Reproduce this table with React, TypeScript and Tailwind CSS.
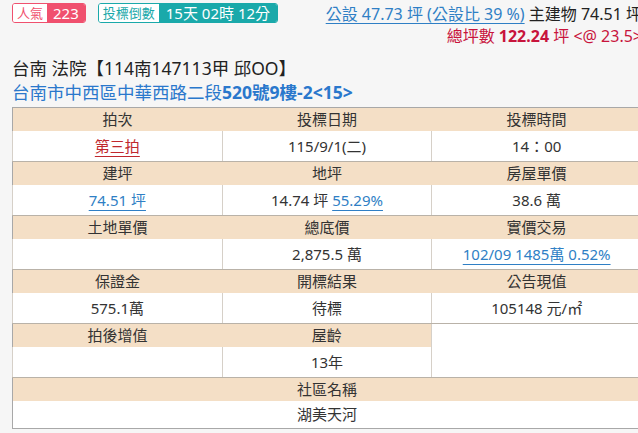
import React from "react";

const font = { fontFamily: '"Noto Sans", "Noto Sans CJK TC", sans-serif' };

function Head({ children, span }: { children: React.ReactNode; span?: number }) {
  return (
    <td colSpan={span} className="h-[23px] bg-[#f4dfc6] text-center text-[15px] leading-[22px] text-[#333] p-0">
      {children}
    </td>
  );
}

function Cell({ children }: { children?: React.ReactNode }) {
  return (
    <td className="h-[31px] bg-white text-center text-[15px] leading-[22px] text-[#333] border-l border-r border-l-[#d6d0c8] border-r-[#d6d0c8] border-b border-b-[#b9b2a8] p-0">
      {children}
    </td>
  );
}

export default function App() {
  return (
    <div className="w-[638px] h-[433px] overflow-hidden bg-[#f6f6f6]" style={font}>
      <div className="w-[680px] pl-[12px]">
        <div className="flex justify-between items-start h-[56px]">
          <div className="flex items-center gap-[12px] mt-[3px]">
            <div className="flex h-[20px] rounded-[3px] border border-[#f0506e] overflow-hidden text-[13px] leading-[18px]">
              <span className="bg-white text-[#f0506e] px-[4px]">人氣</span>
              <span className="bg-[#f0506e] text-white px-[6px] text-[15px]">223</span>
            </div>
            <div className="flex h-[20px] rounded-[3px] border border-[#1aa9aa] overflow-hidden text-[13px] leading-[18px]">
              <span className="bg-white text-[#1aa9aa] px-[4px]">投標倒數</span>
              <span className="bg-[#1aa9aa] text-white px-[7px] text-[15px]">15天 02時 12分</span>
            </div>
          </div>
          <div className="text-right text-[16px] leading-[22px] pt-[3px] pr-[38px] whitespace-nowrap">
            <div>
              <span className="text-[#2f7fc5] underline decoration-[#2f7fc5] underline-offset-[3px]">公設 47.73 坪 (公設比 39 %)</span>
              <span className="text-[#222]"> 主建物 74.51 坪</span>
            </div>
            <div className="text-[#c8143c]">
              總坪數 <b>122.24</b> 坪 &lt;@ 23.5&gt;
            </div>
          </div>
        </div>
        <div className="text-[17.5px] leading-[24px] text-[#222]">台南 法院【114南147113甲 邱OO】</div>
        <div className="text-[17.5px] leading-[24px] text-[#2a78cc]">
          台南市中西區中華西路二段<span className="font-bold">520號9樓-2&lt;15&gt;</span>
        </div>
        <table className="mt-[3px] w-[630px] border-collapse border border-[#a8a8a8] table-fixed">
          <tbody>
            <tr>
              <Head>拍次</Head>
              <Head>投標日期</Head>
              <Head>投標時間</Head>
            </tr>
            <tr>
              <Cell>
                <span className="text-[#c0282d] underline decoration-[#c0282d] underline-offset-[4px]">第三拍</span>
              </Cell>
              <Cell>115/9/1(二)</Cell>
              <Cell>14：00</Cell>
            </tr>
            <tr>
              <Head>建坪</Head>
              <Head>地坪</Head>
              <Head>房屋單價</Head>
            </tr>
            <tr>
              <Cell>
                <span className="text-[#2f7fc5] underline decoration-[#2f7fc5] underline-offset-[4px]">74.51 坪</span>
              </Cell>
              <Cell>
                14.74 坪{" "}
                <span className="text-[#2f7fc5] underline decoration-[#2f7fc5] underline-offset-[4px]">55.29%</span>
              </Cell>
              <Cell>38.6 萬</Cell>
            </tr>
            <tr>
              <Head>土地單價</Head>
              <Head>總底價</Head>
              <Head>實價交易</Head>
            </tr>
            <tr>
              <Cell></Cell>
              <Cell>2,875.5 萬</Cell>
              <Cell>
                <span className="text-[#2f7fc5] underline decoration-[#2f7fc5] underline-offset-[4px]">102/09 1485萬 0.52%</span>
              </Cell>
            </tr>
            <tr>
              <Head>保證金</Head>
              <Head>開標結果</Head>
              <Head>公告現值</Head>
            </tr>
            <tr>
              <Cell>575.1萬</Cell>
              <Cell>待標</Cell>
              <Cell>105148 元/㎡</Cell>
            </tr>
            <tr>
              <Head>拍後增值</Head>
              <Head>屋齡</Head>
              <td rowSpan={2} className="bg-white border-l border-l-[#d6d0c8] border-b border-b-[#b9b2a8] p-0"></td>
            </tr>
            <tr>
              <Cell></Cell>
              <Cell>13年</Cell>
            </tr>
            <tr>
              <Head span={3}>社區名稱</Head>
            </tr>
            <tr>
              <td colSpan={3} className="h-[28px] bg-white text-center text-[15px] leading-[22px] text-[#333] p-0">
                湖美天河
              </td>
            </tr>
          </tbody>
        </table>
      </div>
    </div>
  );
}
